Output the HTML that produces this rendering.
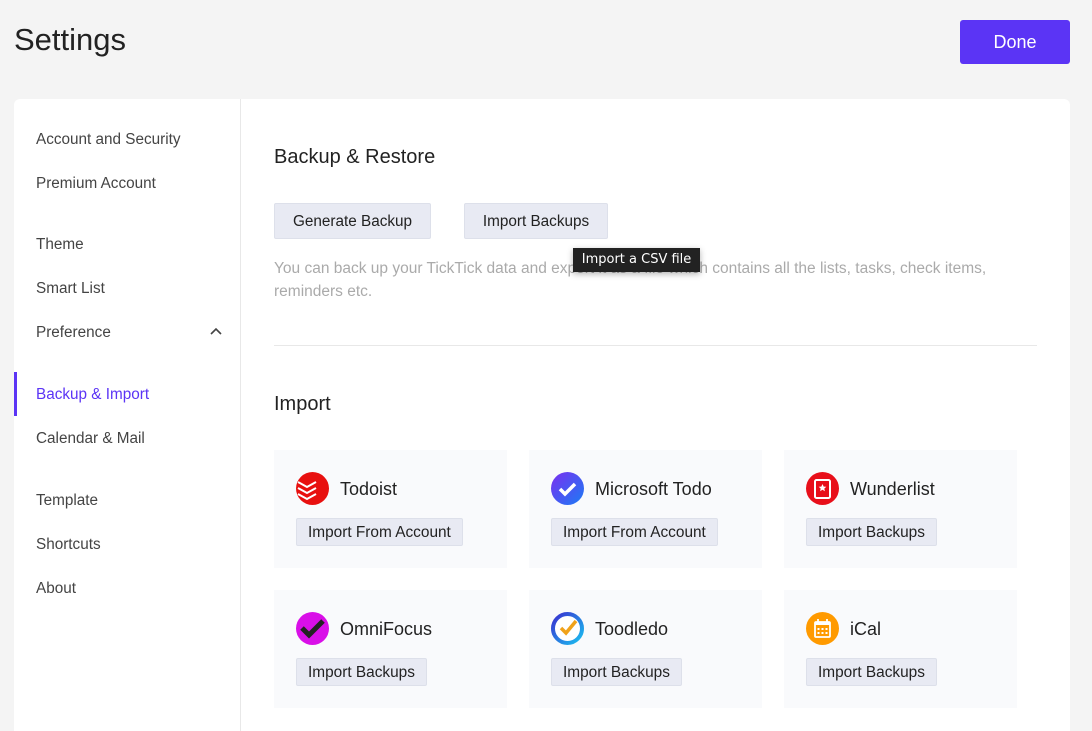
<!DOCTYPE html><html style="height:731px;overflow:hidden"><head><style>
body{margin:0;background:#f4f4f4;font-family:"Liberation Sans",sans-serif;width:1092px;height:731px;overflow:hidden;position:relative;color:#222}
.a{position:absolute}
h1{position:absolute;left:14px;top:22px;margin:0;font-weight:400;font-size:31px;color:#222}
.done{left:960px;top:20px;width:110px;height:44px;background:#5b34f5;color:#fff;border-radius:3px;font-size:18px;line-height:44px;text-align:center}
.panel{left:14px;top:99px;width:1056px;height:632px;background:#fff;border-radius:6px 6px 0 0}
.side{left:14px;top:99px;width:226px;height:632px;border-right:1px solid #e8e8e8}
.si{position:absolute;left:22px;top:0;font-size:15.3px;color:#444;margin-top:1px}
.btn{position:absolute;background:#e8eaf3;border:1px solid #dde0ea;color:#222;font-size:15.3px;text-align:center;border-radius:2px}
.card{position:absolute;width:233px;height:118px;background:#f9fafc}
.card .n{position:absolute;left:66px;top:29px;font-size:18px;color:#222}
.card .ic{position:absolute;left:22px;top:22px;width:33px;height:33px}
.card .b{position:absolute;left:22px;top:68px;height:26px;line-height:28px;padding:0 11px;background:#e8eaf3;border:1px solid #dde0ea;font-size:15.4px;color:#222;border-radius:2px}
</style></head><body>
<h1>Settings</h1>
<div class="a done">Done</div>
<div class="a panel"></div>
<div class="a side">
<div class="si" style="top:31px">Account and Security</div>
<div class="si" style="top:75px">Premium Account</div>
<div class="si" style="top:136px">Theme</div>
<div class="si" style="top:180px">Smart List</div>
<div class="si" style="top:224px">Preference</div>
<svg class="a" style="left:196px;top:228px" width="12" height="8" viewBox="0 0 12 8"><path d="M1 7L6 2L11 7" fill="none" stroke="#444" stroke-width="1.6"/></svg>
<div class="a" style="left:0;top:273px;width:3px;height:44px;background:#5b34f5"></div>
<div class="si" style="top:286px;color:#5b34f5">Backup &amp; Import</div>
<div class="si" style="top:330px">Calendar &amp; Mail</div>
<div class="si" style="top:392px">Template</div>
<div class="si" style="top:436px">Shortcuts</div>
<div class="si" style="top:480px">About</div>
</div>
<div class="a" style="left:274px;top:146px;font-size:20px">Backup &amp; Restore</div>
<div class="btn" style="left:274px;top:203px;width:155px;height:34px;line-height:36px">Generate Backup</div>
<div class="btn" style="left:464px;top:203px;width:142px;height:34px;line-height:36px">Import Backups</div>
<div class="a" style="left:274px;top:257px;width:745px;font-size:15.5px;line-height:23px;color:#aaa">You can back up your TickTick data and export it as a file which contains all the lists, tasks, check items, reminders etc.</div>
<div class="a" style="left:573px;top:248px;width:127px;height:24px;background:#222;color:#fff;font-family:'DejaVu Sans',sans-serif;font-size:13px;line-height:24px;text-align:center;box-shadow:0 2px 6px rgba(0,0,0,.3)">Import a CSV file</div>
<div class="a" style="left:274px;top:345px;width:763px;height:1px;background:#e8e8e8"></div>
<div class="a" style="left:274px;top:393px;font-size:20px">Import</div>

<div class="card" style="left:274px;top:450px"><svg class="ic" viewBox="0 0 33 33"><circle cx="16.5" cy="16.5" r="16.5" fill="#e8100f"/><path d="M2 10l9 5 9-5M2 16l9 5 9-5M2 22l9 5 9-5" fill="none" stroke="#fff" stroke-width="2"/></svg><div class="n">Todoist</div><div class="b">Import From Account</div></div>
<div class="card" style="left:529px;top:450px"><svg class="ic" viewBox="0 0 33 33"><defs><linearGradient id="g1" x1="0" y1="0" x2="1" y2="1"><stop offset="0" stop-color="#7b2ff0"/><stop offset="1" stop-color="#1a7cf5"/></linearGradient></defs><circle cx="16.5" cy="16.5" r="16.5" fill="url(#g1)"/><path d="M9 17l5 5 10-10" fill="none" stroke="#fff" stroke-width="3.5"/></svg><div class="n">Microsoft Todo</div><div class="b">Import From Account</div></div>
<div class="card" style="left:784px;top:450px"><svg class="ic" viewBox="0 0 33 33"><circle cx="16.5" cy="16.5" r="16.5" fill="#e80f1a"/><rect x="9" y="8" width="15" height="18" rx="1.5" fill="none" stroke="#fff" stroke-width="2"/><path d="M16.5 12l1.2 2.6 2.6.2-2 1.8.6 2.6-2.4-1.4-2.4 1.4.6-2.6-2-1.8 2.6-.2z" fill="#fff"/></svg><div class="n">Wunderlist</div><div class="b">Import Backups</div></div>
<div class="card" style="left:274px;top:590px"><svg class="ic" viewBox="0 0 33 33"><circle cx="16.5" cy="16.5" r="16.5" fill="#d90fe8"/><path d="M6 16l7 7 14-14" fill="none" stroke="#222" stroke-width="5"/></svg><div class="n">OmniFocus</div><div class="b">Import Backups</div></div>
<div class="card" style="left:529px;top:590px"><svg class="ic" viewBox="0 0 33 33"><defs><linearGradient id="g2" x1="0" y1="0" x2="1" y2="1"><stop offset="0" stop-color="#3a2fd0"/><stop offset="1" stop-color="#1ac0f0"/></linearGradient></defs><circle cx="16.5" cy="16.5" r="14.5" fill="#fff" stroke="url(#g2)" stroke-width="4"/><path d="M10 16l5 5 10-12" fill="none" stroke="#f0a21a" stroke-width="3.5"/></svg><div class="n">Toodledo</div><div class="b">Import Backups</div></div>
<div class="card" style="left:784px;top:590px"><svg class="ic" viewBox="0 0 33 33"><circle cx="16.5" cy="16.5" r="16.5" fill="#ff9a00"/><rect x="9" y="10" width="15" height="15" rx="1" fill="none" stroke="#fff" stroke-width="1.8"/><rect x="9" y="10" width="15" height="3" fill="#fff"/><path d="M12 7v4M21 7v4" stroke="#fff" stroke-width="1.8"/><g fill="#fff"><rect x="11.5" y="16" width="2" height="2"/><rect x="15.5" y="16" width="2" height="2"/><rect x="19.5" y="16" width="2" height="2"/><rect x="11.5" y="20" width="2" height="2"/><rect x="15.5" y="20" width="2" height="2"/><rect x="19.5" y="20" width="2" height="2"/></g></svg><div class="n">iCal</div><div class="b">Import Backups</div></div>
</body></html>
